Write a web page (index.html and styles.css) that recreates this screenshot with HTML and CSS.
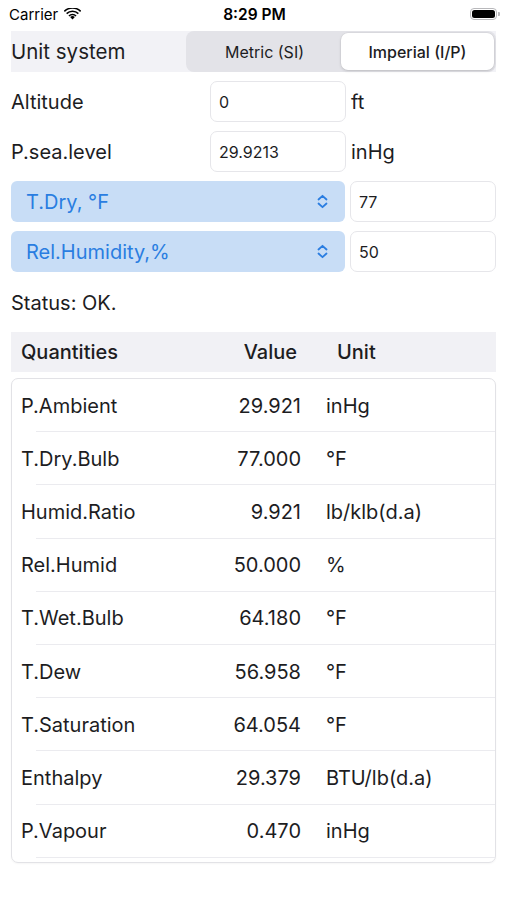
FILE: index.html
```html
<!DOCTYPE html>
<html lang="en">
<head>
<meta charset="utf-8">
<title>Psychrometrics</title>
<link rel="stylesheet" href="styles.css">
</head>
<body>
<div class="statusbar">
  <div class="sb-left">
    <span class="carrier">Carrier</span>
    <svg class="wifi" width="17" height="12" viewBox="0 0 17 12">
      <path d="M8.5 11.6 L6.1 9.1 A3.4 3.4 0 0 1 10.9 9.1 Z" fill="#000"/>
      <path d="M4.4 7.4 A5.8 5.8 0 0 1 12.6 7.4 L11.5 8.5 A4.2 4.2 0 0 0 5.5 8.5 Z" fill="#000"/>
      <path d="M2.1 5.1 A9.1 9.1 0 0 1 14.9 5.1 L13.8 6.2 A7.5 7.5 0 0 0 3.2 6.2 Z" fill="#000"/>
      <path d="M-0.2 2.8 A12.4 12.4 0 0 1 17.2 2.8 L16.1 3.9 A10.8 10.8 0 0 0 0.9 3.9 Z" fill="#000"/>
    </svg>
  </div>
  <div class="sb-time">8:29 PM</div>
  <div class="sb-right">
    <div class="battery"><div class="battery-fill"></div></div>
    <div class="battery-tip"></div>
  </div>
</div>

<main class="content">
  <div class="unit-row">
    <span class="unit-label">Unit system</span>
    <div class="segmented">
      <div class="seg">Metric (SI)</div>
      <div class="seg seg-active">Imperial (I/P)</div>
    </div>
  </div>

  <div class="field-row">
    <span class="field-label">Altitude</span>
    <div class="input input-mid">0</div>
    <span class="field-unit">ft</span>
  </div>
  <div class="field-row">
    <span class="field-label">P.sea.level</span>
    <div class="input input-mid">29.9213</div>
    <span class="field-unit">inHg</span>
  </div>

  <div class="field-row">
    <div class="picker">
      <span>T.Dry, °F</span>
      <svg class="chev" width="11" height="15" viewBox="0 0 11 15">
        <path d="M1.5 5.5 L5.5 1.8 L9.5 5.5 M1.5 9.5 L5.5 13.2 L9.5 9.5" fill="none" stroke="#2a7de1" stroke-width="1.8" stroke-linecap="round" stroke-linejoin="round"/>
      </svg>
    </div>
    <div class="input input-wide">77</div>
  </div>
  <div class="field-row">
    <div class="picker">
      <span>Rel.Humidity,%</span>
      <svg class="chev" width="11" height="15" viewBox="0 0 11 15">
        <path d="M1.5 5.5 L5.5 1.8 L9.5 5.5 M1.5 9.5 L5.5 13.2 L9.5 9.5" fill="none" stroke="#2a7de1" stroke-width="1.8" stroke-linecap="round" stroke-linejoin="round"/>
      </svg>
    </div>
    <div class="input input-wide">50</div>
  </div>

  <div class="status">Status: OK.</div>

  <div class="table-head">
    <span>Quantities</span>
    <span class="th-value">Value</span>
    <span class="th-unit">Unit</span>
  </div>

  <div class="table-card">
    <div class="trow"><span>P.Ambient</span><span class="val">29.921</span><span class="unit">inHg</span></div>
    <div class="trow"><span>T.Dry.Bulb</span><span class="val">77.000</span><span class="unit">°F</span></div>
    <div class="trow"><span>Humid.Ratio</span><span class="val">9.921</span><span class="unit">lb/klb(d.a)</span></div>
    <div class="trow"><span>Rel.Humid</span><span class="val">50.000</span><span class="unit">%</span></div>
    <div class="trow"><span>T.Wet.Bulb</span><span class="val">64.180</span><span class="unit">°F</span></div>
    <div class="trow"><span>T.Dew</span><span class="val">56.958</span><span class="unit">°F</span></div>
    <div class="trow"><span>T.Saturation</span><span class="val">64.054</span><span class="unit">°F</span></div>
    <div class="trow"><span>Enthalpy</span><span class="val">29.379</span><span class="unit">BTU/lb(d.a)</span></div>
    <div class="trow"><span>P.Vapour</span><span class="val">0.470</span><span class="unit">inHg</span></div>
  </div>
</main>
</body>
</html>
```

FILE: styles.css
```css
* { box-sizing: border-box; }

html, body {
  margin: 0;
  padding: 0;
  background: #ffffff;
}

body {
  font-family: Inter, "Noto Sans", "Liberation Sans", sans-serif;
  color: #1d1d1f;
  width: 507px;
  height: 900px;
  overflow: hidden;
}

.statusbar {
  height: 28px;
  display: flex;
  align-items: center;
  justify-content: space-between;
  padding: 0 7px 0 9px;
}

.sb-left {
  display: flex;
  align-items: center;
  gap: 6px;
  width: 120px;
}

.carrier {
  font-size: 15px;
  color: #000;
}

.wifi { margin-top: -1px; }

.sb-time {
  font-size: 15.5px;
  font-weight: 600;
  color: #000;
}

.sb-right {
  width: 120px;
  display: flex;
  justify-content: flex-end;
  align-items: center;
  gap: 1px;
}

.battery {
  width: 27px;
  height: 12px;
  border: 1px solid #b8b8bb;
  border-radius: 4px;
  padding: 1px;
}

.battery-fill {
  width: 100%;
  height: 100%;
  background: #000;
  border-radius: 2.5px;
}

.battery-tip {
  width: 2px;
  height: 4px;
  background: #b8b8bb;
  border-radius: 0 1px 1px 0;
}

.content {
  padding: 3px 11px 0 11px;
}

.unit-row {
  display: flex;
  align-items: center;
  height: 41px;
  background: #f2f2f6;
}

.unit-label {
  font-size: 20.5px;
  width: 175px;
}

.segmented {
  flex: 1;
  height: 41px;
  display: flex;
  background: #e3e3e8;
  border-radius: 8px;
  padding: 2px;
}

.seg {
  flex: 1;
  display: flex;
  align-items: center;
  justify-content: center;
  font-size: 16px;
  color: #1d1d1f;
  border-radius: 7px;
}

.seg-active {
  background: #ffffff;
  font-weight: 500;
  box-shadow: 0 1px 3px rgba(0, 0, 0, 0.15), 0 0 0 0.5px rgba(0, 0, 0, 0.05);
}

.field-row {
  display: flex;
  align-items: center;
  height: 41px;
  margin-top: 9px;
}

.field-label {
  font-size: 20px;
  width: 199px;
}

.input {
  height: 41px;
  border: 1px solid #e6e6ea;
  border-radius: 7px;
  display: flex;
  align-items: center;
  padding-left: 8px;
  font-size: 16px;
  color: #1d1d1f;
}

.input-mid { width: 136px; }

.input-wide {
  width: 146px;
  margin-left: 5px;
}

.field-unit {
  font-size: 20px;
  margin-left: 5px;
}

.picker {
  width: 334px;
  height: 41px;
  background: #c8ddf6;
  border-radius: 6px;
  display: flex;
  align-items: center;
  justify-content: space-between;
  padding: 0 17px 0 15px;
  font-size: 20px;
  color: #2a7de1;
}

.status {
  font-size: 20px;
  margin-top: 20px;
  height: 22px;
  line-height: 22px;
}

.table-head {
  margin-top: 18px;
  height: 40px;
  background: #f1f1f5;
  display: grid;
  grid-template-columns: 1fr 100px 199px;
  align-items: center;
  padding-left: 10px;
  font-size: 20px;
  font-weight: 500;
}

.th-value { text-align: right; }
.th-unit { padding-left: 40px; }

.table-card {
  margin-top: 6px;
  border: 1px solid #e2e2e6;
  border-radius: 7px;
  padding-bottom: 4px;
  box-shadow: 0 1px 2px rgba(0, 0, 0, 0.04);
}

.trow {
  height: 53.2px;
  display: grid;
  grid-template-columns: 1fr 100px 194px;
  align-items: center;
  padding-left: 9px;
  font-size: 20px;
  position: relative;
}

.trow::after {
  content: "";
  position: absolute;
  left: 24px;
  right: 0;
  bottom: 0;
  height: 1px;
  background: #ebebef;
}

.val { text-align: right; }
.unit { padding-left: 25px; }
```
